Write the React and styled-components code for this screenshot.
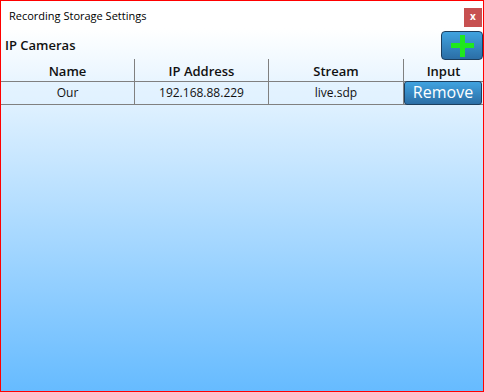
import React from "react";
import styled, { createGlobalStyle } from "styled-components";

const cameras = [{ name: "Our", ip: "192.168.88.229", stream: "live.sdp" }];

function App() {
  return (
    <>
      <Global />
      <Window>
        <TitleBar>
          <Title>Recording Storage Settings</Title>
          <CloseButton>x</CloseButton>
        </TitleBar>
        <Toolbar>
          <Heading>IP Cameras</Heading>
          <BlueButton $w={42} $h={29}>
            <svg width="23" height="22" viewBox="0 0 23 22">
              <rect x="0" y="8" width="23" height="5" fill="#1fe81f" />
              <rect x="9" y="0" width="5" height="22" fill="#1fe81f" />
            </svg>
          </BlueButton>
        </Toolbar>
        <Table>
          <HeadCell>Name</HeadCell>
          <HeadCell $line>IP Address</HeadCell>
          <HeadCell $line>Stream</HeadCell>
          <HeadCell $line>Input</HeadCell>
          {cameras.map((c) => (
            <React.Fragment key={c.ip}>
              <Cell>{c.name}</Cell>
              <Cell $line>{c.ip}</Cell>
              <Cell $line>{c.stream}</Cell>
              <Cell $line>
                <RemoveButton>Remove</RemoveButton>
              </Cell>
            </React.Fragment>
          ))}
        </Table>
      </Window>
    </>
  );
}

export default App;

const Global = createGlobalStyle`
  html, body {
    margin: 0;
    padding: 0;
    width: 484px;
    height: 392px;
    overflow: hidden;
  }
  body {
    font-family: "Open Sans", "Noto Sans", sans-serif;
  }
`;

const Window = styled.div`
  box-sizing: border-box;
  width: 484px;
  height: 392px;
  border: 1px solid #ff0000;
  background: linear-gradient(to bottom, #ffffff 0%, #ffffff 7%, #66bbff 100%);
  display: flex;
  flex-direction: column;
`;

const TitleBar = styled.div`
  height: 30px;
  display: flex;
  justify-content: space-between;
  align-items: flex-start;
  padding-left: 8px;
`;

const Title = styled.div`
  font-size: 11px;
  line-height: 30px;
  color: #000;
`;

const CloseButton = styled.div`
  width: 18px;
  height: 19px;
  margin-top: 7px;
  margin-right: 1px;
  background: #c75050;
  color: #fff;
  font-size: 10px;
  font-weight: 700;
  line-height: 17px;
  text-align: center;
`;

const Toolbar = styled.div`
  height: 28px;
  display: flex;
  justify-content: space-between;
  align-items: flex-start;
  padding-left: 4px;
`;

const Heading = styled.div`
  font-size: 13px;
  font-weight: 600;
  line-height: 28px;
  color: #111;
`;

const BlueButton = styled.div`
  box-sizing: border-box;
  width: ${(p) => p.$w}px;
  height: ${(p) => p.$h}px;
  border: 1px solid #1d3f5e;
  border-radius: 4px;
  background: linear-gradient(to bottom, #40a3e0, #2b6ea6);
  display: flex;
  align-items: center;
  justify-content: center;
  position: relative;
  z-index: 1;
`;

const Table = styled.div`
  display: grid;
  grid-template-columns: 133px 134px 135px 1fr;
`;

const HeadCell = styled.div`
  height: 22px;
  border-bottom: 1px solid #808080;
  border-left: ${(p) => (p.$line ? "1px solid #808080" : "none")};
  font-size: 13px;
  font-weight: 600;
  line-height: 24px;
  text-align: center;
  color: #111;
`;

const Cell = styled.div`
  height: 22px;
  border-bottom: 1px solid #808080;
  border-left: ${(p) => (p.$line ? "1px solid #808080" : "none")};
  background: rgba(225, 241, 255, 0.6);
  font-size: 12px;
  line-height: 22px;
  text-align: center;
  color: #111;
  position: relative;
`;

const RemoveButton = styled.div`
  position: absolute;
  left: 0;
  top: -1px;
  width: 78px;
  height: 24px;
  box-sizing: border-box;
  border: 1px solid #1d3f5e;
  border-radius: 3px;
  background: linear-gradient(to bottom, #40a3e0, #2b6ea6);
  color: #fff;
  font-size: 16px;
  line-height: 21px;
  text-align: center;
`;
